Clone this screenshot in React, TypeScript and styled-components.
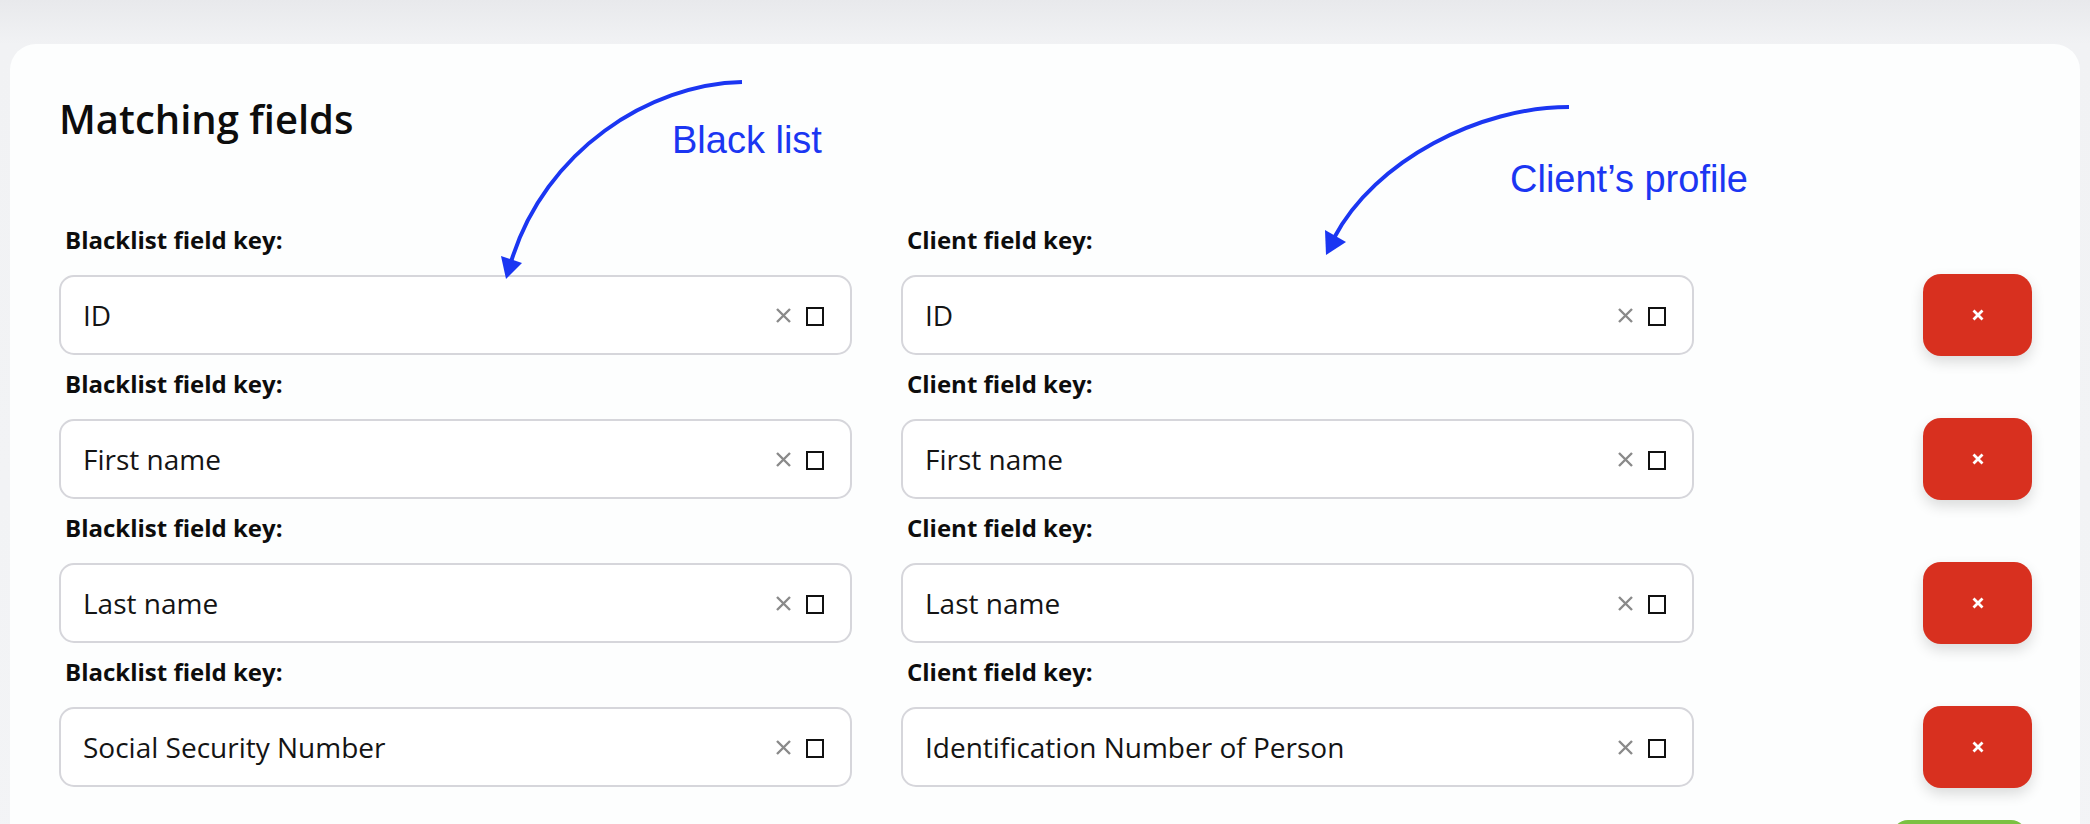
import React from "react";
import styled, { createGlobalStyle } from "styled-components";

const GlobalStyle = createGlobalStyle`
  html, body { margin: 0; padding: 0; }
  body {
    background: linear-gradient(#e8e9ec 0px, #f1f2f4 44px, #f3f4f6 100%);
    font-family: "Open Sans", "Noto Sans", sans-serif;
    min-height: 824px;
    overflow: hidden;
  }
`;

const Page = styled.div`
  padding: 44px 10px 0 10px;
`;

const Card = styled.section`
  position: relative;
  background: #fdfefe;
  border-radius: 26px 26px 0 0;
  padding: 51px 48px 40px 49px;
  min-height: 800px;
  box-sizing: border-box;
`;

const Title = styled.h2`
  margin: 0 0 82px 0;
  font-size: 40px;
  line-height: 48px;
  font-weight: 600;
  color: #0d0d0d;
`;

const Rows = styled.div`
  display: flex;
  flex-direction: column;
  gap: 14px;
`;

const Row = styled.div`
  display: grid;
  grid-template-columns: 1fr 1fr 289px;
  column-gap: 49px;
  align-items: end;
`;

const Field = styled.div`
  display: flex;
  flex-direction: column;
`;

const Label = styled.label`
  margin: 0 0 20px 6px;
  font-size: 24px;
  line-height: 30px;
  font-weight: 700;
  color: #0d0d0d;
`;

const InputBox = styled.div`
  box-sizing: border-box;
  height: 80px;
  border: 2px solid #d6d6db;
  border-radius: 15px;
  background: #ffffff;
  display: flex;
  align-items: center;
  gap: 14px;
  padding: 0 26px 0 22px;
`;

const Value = styled.span`
  flex: 1;
  font-size: 28px;
  line-height: 38px;
  color: #141414;
  white-space: nowrap;
`;

const ClearIcon = styled.svg`
  width: 17px;
  height: 17px;
  flex: none;
`;

const ToggleBox = styled.span`
  box-sizing: border-box;
  width: 18px;
  height: 19px;
  border: 2.7px solid #111;
  flex: none;
  margin-top: 3px;
`;

const RemoveButton = styled.button`
  justify-self: end;
  width: 109px;
  height: 82px;
  margin-bottom: -1px;
  border: none;
  border-radius: 18px;
  background: #d8301f;
  box-shadow: 0 6px 14px rgba(0, 0, 0, 0.14);
  display: flex;
  align-items: center;
  justify-content: center;
  padding: 0;
`;

const Footer = styled.div`
  display: flex;
  justify-content: flex-end;
  margin-top: 33px;
  padding-right: 5px;
`;

const AddButton = styled.button`
  width: 135px;
  height: 60px;
  border: none;
  border-radius: 16px;
  background: #7bc142;
`;

const Annotations = styled.div`
  position: absolute;
  inset: 0;
  pointer-events: none;
`;

const ArrowLayer = styled.svg`
  position: absolute;
  left: 0;
  top: 0;
`;

const Note = styled.span<{ $x: number; $y: number }>`
  position: absolute;
  left: ${(p) => p.$x}px;
  top: ${(p) => p.$y}px;
  font-family: "Liberation Sans", Arial, sans-serif;
  font-size: 38px;
  line-height: 38px;
  color: #1b36f2;
  white-space: nowrap;
`;

const rows = [
  ["ID", "ID"],
  ["First name", "First name"],
  ["Last name", "Last name"],
  ["Social Security Number", "Identification Number of Person"],
];

const Clear = () => (
  <ClearIcon viewBox="0 0 17 17">
    <path d="M2 2 L15 15 M15 2 L2 15" stroke="#8a8a8a" strokeWidth="2.4" strokeLinecap="butt" />
  </ClearIcon>
);

const SelectInput = ({ value }: { value: string }) => (
  <InputBox>
    <Value>{value}</Value>
    <Clear />
    <ToggleBox />
  </InputBox>
);

export default function App() {
  return (
    <>
      <GlobalStyle />
      <Page>
        <Card>
          <Title>Matching fields</Title>
          <Rows>
            {rows.map(([a, b], i) => (
              <Row key={i}>
                <Field>
                  <Label>Blacklist field key:</Label>
                  <SelectInput value={a} />
                </Field>
                <Field>
                  <Label>Client field key:</Label>
                  <SelectInput value={b} />
                </Field>
                <RemoveButton aria-label="remove">
                  <svg width="12" height="12" viewBox="0 0 12 12">
                    <path d="M1.5 1.5 L10.5 10.5 M10.5 1.5 L1.5 10.5" stroke="#fff" strokeWidth="2.8" />
                  </svg>
                </RemoveButton>
              </Row>
            ))}
          </Rows>
          <Footer>
            <AddButton aria-label="add" />
          </Footer>
          <Annotations>
            <ArrowLayer width="2070" height="400" viewBox="10 44 2070 400">
              <path
                d="M742 82 C 650 84, 545 150, 511 262"
                fill="none"
                stroke="#1b36f2"
                strokeWidth="4"
              />
              <polygon points="501,256 522,263 506,279" fill="#1b36f2" />
              <path
                d="M1569 107 C 1480 107, 1375 160, 1334 238"
                fill="none"
                stroke="#1b36f2"
                strokeWidth="4"
              />
              <polygon points="1325,230 1346,242 1326,255" fill="#1b36f2" />
            </ArrowLayer>
            <Note $x={662} $y={77}>Black list</Note>
            <Note $x={1500} $y={116}>Client’s profile</Note>
          </Annotations>
        </Card>
      </Page>
    </>
  );
}
